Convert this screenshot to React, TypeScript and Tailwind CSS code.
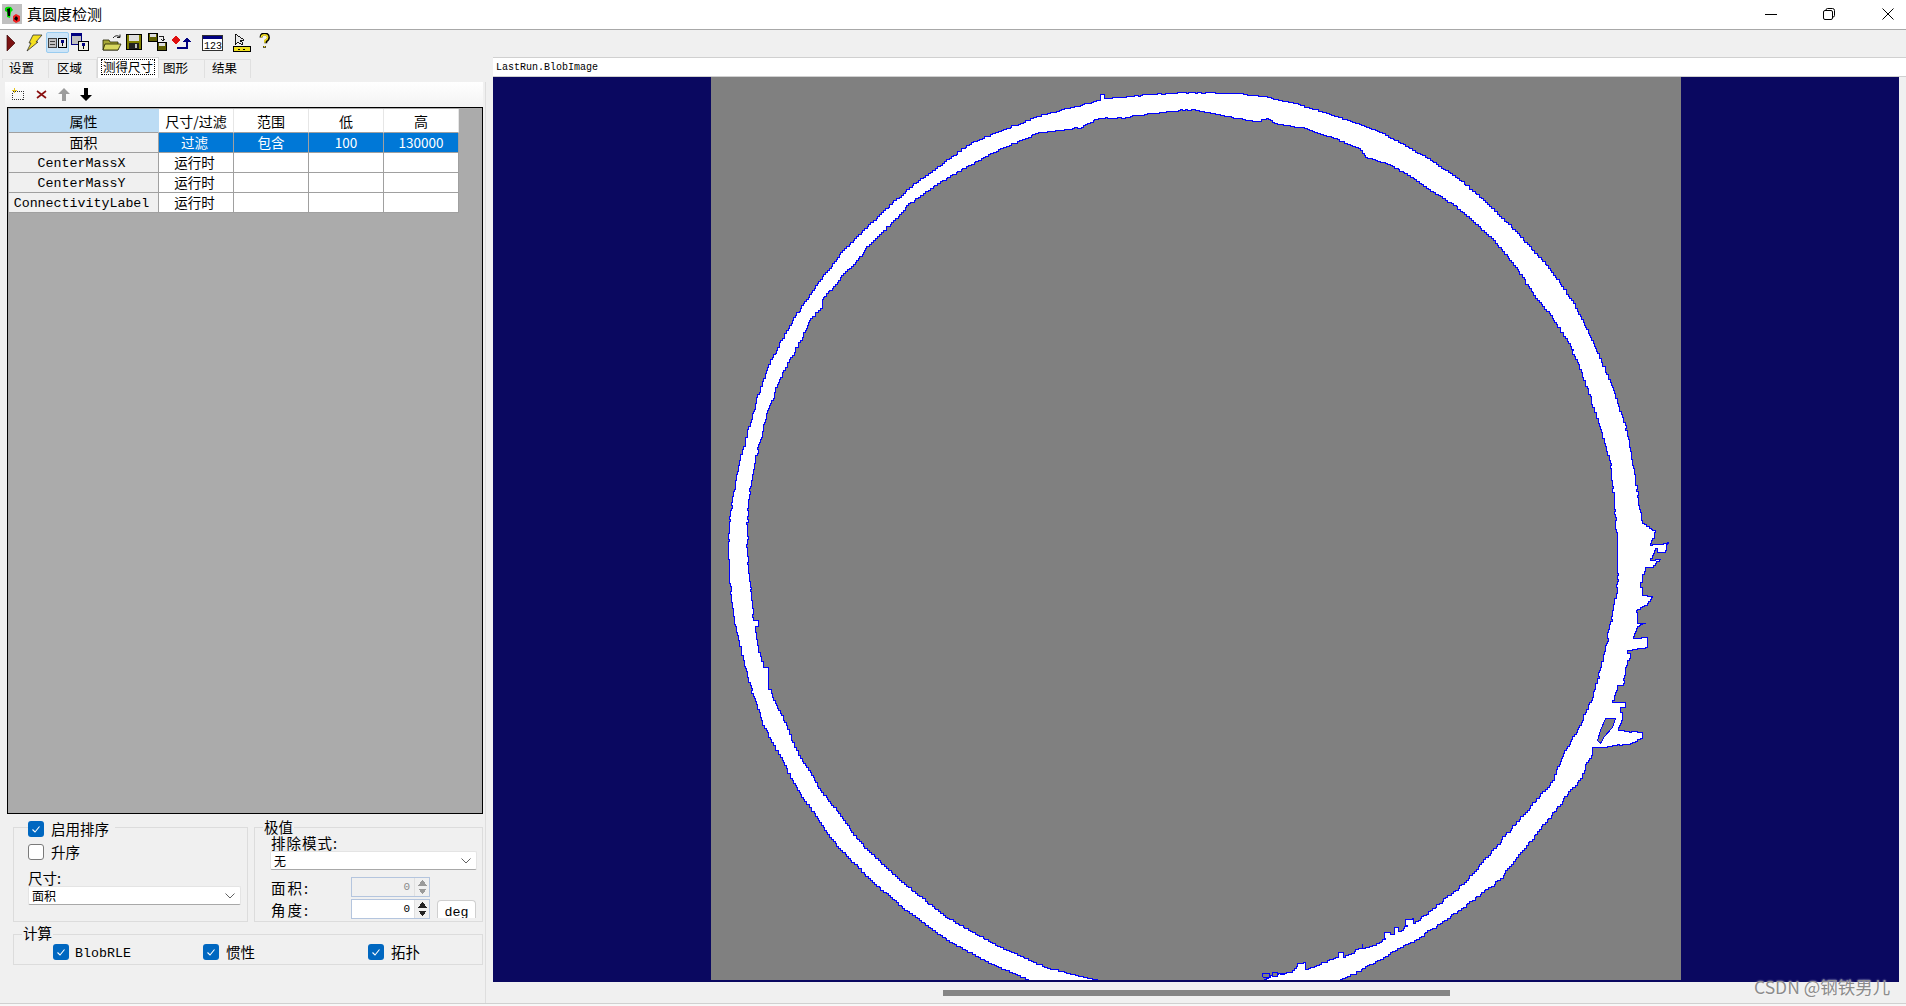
import React from 'react';

type Pt = [number, number];

const OUTER: Pt[] = [
  [1033, 981], [991, 963], [949, 940], [907, 910], [872, 880], [842, 850], [827, 832], [815, 813], [803, 797],
  [792, 778], [782, 757], [770, 737], [762, 720], [753, 693], [748, 677], [743, 657], [738, 637], [733, 613],
  [730, 583], [728, 550], [730, 513], [735, 480], [740, 457], [747, 432], [755, 403], [763, 378], [772, 357],
  [782, 338], [792, 320], [803, 303], [812, 290], [827, 270], [842, 250], [873, 220], [909, 187], [949, 158],
  [971, 142], [1033, 117], [1096, 100], [1100, 94], [1104, 98], [1140, 95], [1180, 92], [1235, 93], [1267, 97],
  [1293, 103], [1320, 111], [1347, 120], [1377, 131], [1400, 143], [1427, 158], [1457, 178], [1483, 200],
  [1517, 233], [1550, 270], [1573, 303], [1593, 343], [1613, 390], [1627, 433], [1635, 480], [1638, 500],
  [1642, 523], [1655, 532], [1650, 545], [1663, 543], [1668, 542], [1665, 552], [1657, 548], [1650, 560],
  [1660, 559], [1653, 567], [1645, 568], [1640, 587], [1642, 595], [1652, 597], [1647, 605], [1637, 610],
  [1637, 623], [1645, 623], [1637, 628], [1633, 638], [1647, 637], [1647, 647], [1632, 650], [1627, 653],
  [1630, 658], [1625, 670], [1623, 685], [1617, 690], [1612, 702], [1618, 702], [1625, 707], [1620, 712],
  [1622, 717], [1618, 730], [1637, 732], [1642, 738], [1632, 743], [1617, 745], [1598, 747], [1592, 752],
  [1580, 780], [1500, 880], [1461, 910], [1421, 937], [1380, 960], [1340, 981],
];

const INNER: Pt[] = [
  [1263, 981], [1270, 975], [1290, 972], [1297, 963], [1303, 962], [1305, 969], [1335, 957], [1338, 952],
  [1343, 957], [1358, 948], [1362, 943], [1362, 948], [1375, 945], [1385, 938], [1384, 932], [1390, 934],
  [1394, 927], [1398, 931], [1407, 925], [1405, 919], [1412, 918], [1413, 923], [1430, 910], [1466, 880],
  [1552, 780], [1563, 753], [1578, 727], [1592, 697], [1600, 667], [1606, 643], [1612, 613], [1617, 587],
  [1617, 540], [1614, 500], [1610, 460], [1598, 420], [1585, 380], [1570, 343], [1550, 313], [1535, 295],
  [1517, 267], [1493, 238], [1473, 220], [1453, 203], [1430, 189], [1410, 175], [1390, 164], [1367, 157],
  [1360, 148], [1337, 138], [1317, 132], [1307, 128], [1277, 123], [1268, 118], [1257, 121], [1228, 116],
  [1213, 113], [1193, 109], [1180, 110], [1127, 117], [1100, 118], [1083, 127], [1038, 133], [993, 153],
  [971, 165], [940, 183], [908, 205], [895, 220], [865, 250], [858, 260], [845, 273], [833, 288], [824, 297],
  [822, 308], [810, 320], [803, 337], [792, 357], [783, 372], [775, 392], [767, 413], [760, 442], [755, 460],
  [751, 483], [747, 510], [747, 550], [748, 573], [751, 597], [753, 620], [758, 626], [755, 632], [758, 650],
  [763, 667], [768, 673], [768, 687], [775, 703], [780, 713], [787, 727], [792, 742], [800, 758], [810, 772],
  [818, 788], [830, 803], [842, 818], [853, 835], [867, 850], [899, 880], [945, 917], [995, 945], [1044, 967],
  [1100, 981],
];

// stair-steps the outline so it looks like a traced bitmap edge
const traceEdge = (pts: Pt[]) => {
  let seed = 17;
  const noise = () => {
    seed = (seed * 137 + 91) % 1009;
    return (seed / 1009 - 0.5) * 1.6;
  };
  let d = '';
  pts.forEach(([x, y], i) => {
    if (i === 0) {
      d += `M${x + 0.5} ${y + 0.5}`;
      return;
    }
    const [px, py] = pts[i - 1];
    const len = Math.hypot(x - px, y - py);
    const steps = len < 9 ? 1 : Math.ceil(len / 3);
    for (let s = 1; s <= steps; s++) {
      const t = s / steps;
      const jitter = s === steps ? 0 : noise();
      const nx = Math.round(px + (x - px) * t + jitter) + 0.5;
      const ny = Math.round(py + (y - py) * t + jitter * 0.6) + 0.5;
      d += `H${nx}V${ny}`;
    }
  });
  return d + 'Z';
};

const RING_PATH = traceEdge([...OUTER, ...INNER]);

const MONO = "font-['Liberation_Mono','Noto_Sans_CJK_SC',monospace]";

const COLS = ['w-[150px]', 'w-[75px]', 'w-[75px]', 'w-[75px]', 'w-[75px]'];
const HEADERS = ['属性', '尺寸/过滤', '范围', '低', '高'];
const ROWS = [
  { name: '面积', cells: ['过滤', '包含', '100', '130000'], selected: true },
  { name: 'CenterMassX', cells: ['运行时', '', '', ''], mono: true },
  { name: 'CenterMassY', cells: ['运行时', '', '', ''], mono: true },
  { name: 'ConnectivityLabel', cells: ['运行时', '', '', ''], mono: true },
];

const Checkbox = ({ checked = true }: { checked?: boolean }) => (
  <div
    className={`flex items-center justify-center w-4 h-4 shrink-0 rounded-[3px] ${
      checked ? 'bg-[#0067c0]' : 'bg-white border border-[#7a7a7a]'
    }`}
  >
    {checked && (
      <svg width="10" height="10" viewBox="0 0 10 10" fill="none">
        <path d="M1.5 5.5 L4 8 L8.5 2.5" stroke="white" strokeWidth="1.1" />
      </svg>
    )}
  </div>
);

const Chevron = () => (
  <svg width="10" height="6" viewBox="0 0 10 6" fill="none">
    <path d="M0.5 0.5 L5 5 L9.5 0.5" stroke="#606060" strokeWidth="1" />
  </svg>
);

const Select = ({ label, width }: { label: string; width: string }) => (
  <div
    className={`${width} h-[19px] flex items-center justify-between pl-[3px] pr-[5px] bg-white rounded-[2px] border border-[#e4e4e4] border-b-[#a8a8a8] text-[12px] leading-none`}
  >
    <span>{label}</span>
    <Chevron />
  </div>
);

const Spin = ({ disabled = false }: { disabled?: boolean }) => (
  <div
    className={`w-[79px] h-5 flex items-center justify-end border border-[#b4c5de] ${
      disabled ? 'bg-[#f0f0f0] text-[#8a8a8a]' : 'bg-white text-black'
    }`}
  >
    <span className={`${MONO} text-[11px] leading-none pr-[4px]`}>0</span>
    <div className="w-[15px] h-[18px] bg-[#f0f0f0] flex flex-col items-center justify-center gap-[2px] border-l border-[#e0e0e0]">
      <svg width="9" height="6" viewBox="0 0 9 6" shapeRendering="crispEdges">
        <path d="M0 5.5 L4.5 0 L9 5.5 Z" fill={disabled ? '#9a9a9a' : '#222222'} />
      </svg>
      <svg width="9" height="6" viewBox="0 0 9 6" shapeRendering="crispEdges">
        <path d="M0 0.5 L9 0.5 L4.5 6 Z" fill={disabled ? '#9a9a9a' : '#222222'} />
      </svg>
    </div>
  </div>
);

const TitleIcon = () => (
  <svg width="20" height="20" viewBox="0 0 20 20" className="ml-[2px] shrink-0">
    <rect width="20" height="20" fill="#c0c0c0" />
    <path d="M3 4 Q5 2 9 3 L11 6 L9 8 L8 14 L5 13 L5 8 L3 7 Z" fill="#00e000" />
    <path d="M5 5 L8 4 L8 12 L6 12 Z" fill="#000000" />
    <path d="M11 12 L14 10 L18 12 L18 17 L14 19 L11 17 Z" fill="#f02020" />
    <path d="M12 15 L14 12 L16 14 L15 17 Z" fill="#000000" />
  </svg>
);

const Toolbar = () => (
  <div className="flex items-center h-[23px] mt-px mb-[3px]">
    {/* run */}
    <svg width="12" height="18" viewBox="0 0 12 18" className="ml-[5px]">
      <path d="M2 1 L10 9 L2 17 Z" fill="#7c1212" stroke="#3c0808" strokeWidth="0.7" />
    </svg>
    {/* lightning */}
    <svg width="18" height="18" viewBox="0 0 18 18" className="ml-[8px]">
      <path d="M8 1 L17 1 L11 8 L13 8 L2 17 L6 9 L4 9 Z" fill="#f5e020" stroke="#303030" strokeWidth="0.8" />
    </svg>
    {/* selected mode button */}
    <div className="ml-[3px] w-[23px] h-[21px] flex items-center justify-center bg-[#cce4f7] border border-[#99ccf0] rounded-[2px]">
      <svg width="19" height="10" viewBox="0 0 19 10" shapeRendering="crispEdges">
        <rect x="0.5" y="0.5" width="8" height="9" fill="#c0c0c0" stroke="#404040" />
        <path d="M2 3.5H7M2 6.5H7" stroke="#404040" />
        <rect x="10.5" y="0.5" width="8" height="9" fill="#e8e8e8" stroke="#000000" />
        <rect x="13" y="2" width="3" height="3" fill="#000080" />
        <rect x="14" y="5" width="1" height="3" fill="#000000" />
      </svg>
    </div>
    {/* views */}
    <svg width="19" height="19" viewBox="0 0 19 19" className="ml-[2px]" shapeRendering="crispEdges">
      <rect x="0.5" y="0.5" width="10" height="11" fill="#c0c0c0" stroke="#000080" />
      <rect x="1" y="1" width="9" height="2" fill="#000080" />
      <rect x="7.5" y="8.5" width="10" height="9" fill="#f0f0e0" stroke="#000000" />
      <rect x="11" y="10" width="3" height="3" fill="#000080" />
      <rect x="12" y="13" width="1" height="3" fill="#000000" />
    </svg>
    {/* open */}
    <svg width="20" height="18" viewBox="0 0 20 18" className="ml-[12px]">
      <path d="M1 6 L7 6 L8 8 L16 8 L16 16 L1 16 Z" fill="#a8a838" stroke="#202000" strokeWidth="0.8" />
      <path d="M3 10 L19 10 L16 16 L1 16 Z" fill="#d8d860" stroke="#202000" strokeWidth="0.8" />
      <path d="M11 4 Q14 0 18 3 M18 0.5 L18 3.5 L15 3.5" fill="none" stroke="#202020" strokeWidth="1" />
    </svg>
    {/* save */}
    <svg width="17" height="17" viewBox="0 0 17 17" className="ml-[4px]" shapeRendering="crispEdges">
      <rect x="0.5" y="0.5" width="15" height="15" fill="#808000" stroke="#000000" />
      <rect x="3" y="1" width="10" height="6" fill="#e0e0e0" />
      <rect x="3" y="9" width="10" height="6" fill="#202020" />
      <rect x="9" y="10" width="2" height="4" fill="#c0c0c0" />
    </svg>
    {/* save as */}
    <svg width="19" height="19" viewBox="0 0 19 19" className="ml-[5px]" shapeRendering="crispEdges">
      <rect x="0.5" y="0.5" width="9" height="8" fill="#606000" stroke="#000000" />
      <rect x="2" y="1" width="6" height="3" fill="#e0e0e0" />
      <rect x="9.5" y="9.5" width="9" height="8" fill="#606000" stroke="#000000" />
      <rect x="11" y="10" width="6" height="3" fill="#e0e0e0" />
      <path d="M11 3 H15 V7 M13 6 L15 8 L17 6" fill="none" stroke="#202020" />
    </svg>
    {/* reset */}
    <svg width="19" height="18" viewBox="0 0 19 18" className="ml-[5px]" shapeRendering="crispEdges">
      <circle cx="4" cy="6" r="3.2" fill="#e01010" />
      <rect x="0" y="5" width="8" height="2" fill="#e01010" />
      <rect x="3" y="2" width="2" height="8" fill="#e01010" />
      <path d="M16 8 V15 H5 V13 H14 V8 Z" fill="#000080" />
      <path d="M15 3 L19 8 L11 8 Z" fill="#000080" />
    </svg>
    {/* numeric */}
    <svg width="22" height="18" viewBox="0 0 22 18" className="ml-[11px]" shapeRendering="crispEdges">
      <rect x="0.5" y="1.5" width="20" height="15" fill="#ffffff" stroke="#303030" />
      <rect x="1" y="2" width="19" height="3" fill="#000080" />
      <text x="2" y="15" fontSize="10" fontFamily="Liberation Mono" fill="#000000">123</text>
    </svg>
    {/* measure */}
    <svg width="19" height="20" viewBox="0 0 19 20" className="ml-[9px]" shapeRendering="crispEdges">
      <path d="M2 1 L2 12 L5 9 L9 12 L10 10 L7 8 L11 7 Z" fill="#e8e8e8" stroke="#000000" strokeWidth="0.9" />
      <rect x="0.5" y="13.5" width="17" height="5" fill="#f0e020" stroke="#000000" />
      <path d="M5 16H7M10 16H12" stroke="#000000" />
    </svg>
    {/* help */}
    <svg width="11" height="16" viewBox="0 0 12 18" className="ml-[7px] mb-[3px]">
      <path
        d="M2 5 Q2 1 6 1 Q10.5 1 10.5 5 Q10.5 7.5 7.5 9 L7.5 11.5 M6 14.5 L6 16.5"
        fill="none"
        stroke="#000000"
        strokeWidth="3.2"
      />
      <path
        d="M2.5 5 Q2.5 2 6 2 Q9.5 2 9.5 5 Q9.5 7 6.5 8.5 L6.5 11 M6 14.5 L6 16"
        fill="none"
        stroke="#f5e020"
        strokeWidth="1.8"
      />
    </svg>
  </div>
);

const SubToolbar = () => (
  <div className="flex items-center h-[25px] mt-[4px] ml-[4px] mr-[2px] pl-[6px] bg-gradient-to-b from-white to-[#f3f3f3]">
    <svg width="14" height="13" viewBox="0 0 14 13" shapeRendering="crispEdges">
      <rect x="1.5" y="3.5" width="11" height="8" fill="none" stroke="#333333" strokeDasharray="1 1" />
      <path d="M3 0 V5 M0.5 2.5 H5.5" stroke="#e8c820" />
    </svg>
    <svg width="11" height="11" viewBox="0 0 11 11" className="ml-[11px]">
      <path d="M1 2 L10 9 M10 2 L1 9" stroke="#8a1010" strokeWidth="1.6" />
    </svg>
    <svg width="12" height="13" viewBox="0 0 12 13" className="ml-[11px]">
      <path d="M6 0 L12 6 L8 6 L8 13 L4 13 L4 6 L0 6 Z" fill="#9c9c9c" />
    </svg>
    <svg width="12" height="13" viewBox="0 0 12 13" className="ml-[10px]">
      <path d="M6 13 L12 7 L8 7 L8 0 L4 0 L4 7 L0 7 Z" fill="#000000" />
    </svg>
  </div>
);

const Tabs = () => (
  <div className="flex items-end h-[21px] pl-[2px] text-[12.5px] leading-none">
    <div className="w-[47px] h-[19px] pl-[6px] pb-[2px] flex items-center border border-b-0 border-[#e0e0e0]">设置</div>
    <div className="w-[48px] h-[19px] pl-[8px] pb-[2px] flex items-center border border-b-0 border-l-0 border-[#e0e0e0]">区域</div>
    <div className="w-[62px] h-[21px] pb-[2px] flex items-center justify-center bg-white border border-b-0 border-[#d8d8d8]">
      <span className="px-[1px] py-[1px] border border-dotted border-black">测得尺寸</span>
    </div>
    <div className="w-[46px] h-[19px] pl-[4px] pb-[2px] flex items-center border border-b-0 border-l-0 border-[#e0e0e0]">图形</div>
    <div className="w-[46px] h-[19px] pl-[7px] pb-[2px] flex items-center border border-b-0 border-l-0 border-[#e0e0e0]">结果</div>
  </div>
);

const PropertyGrid = () => (
  <div className="ml-[6px] w-[476px] h-[707px] border border-black p-px bg-[#ababab]">
    <div className="flex h-6 text-[14px] leading-none">
      {HEADERS.map((h, i) => (
        <div
          key={h}
          className={`${COLS[i]} flex items-center justify-center border-b border-[#a0a0a0] border-r ${
            i === 0 ? 'bg-[#bcdcf4] border-r-[#bcdcf4]' : 'bg-white border-r-[#e6e6e6]'
          }`}
        >
          {h}
        </div>
      ))}
    </div>
    {ROWS.map((row) => (
      <div key={row.name} className="flex h-5 leading-none">
        <div
          className={`${COLS[0]} flex items-center justify-center bg-[#f0f0f0] border-r border-b border-[#a0a0a0] ${
            row.mono ? `${MONO} text-[13.3px] pt-[2px] pr-[4px]` : 'text-[14px] pb-[2px]'
          }`}
        >
          {row.name}
        </div>
        {row.cells.map((cell, i) => (
          <div
            key={i}
            className={`${COLS[i + 1]} flex items-center justify-center border-r border-b border-[#a0a0a0] text-[13.5px] ${
              i === 0 ? 'pr-[3px]' : ''
            } ${row.selected ? 'bg-[#0078d7] text-white' : 'bg-white text-black'}`}
          >
            {cell}
          </div>
        ))}
      </div>
    ))}
  </div>
);

const SortGroup = () => (
  <div className="w-[235px] h-[95px] border border-[#dcdcdc] pl-[14px] text-[14.5px] leading-none">
    <div className="flex items-center gap-[7px] h-4 -mt-[7px] w-fit bg-[#f0f0f0] pr-[6px]">
      <Checkbox />
      <span>启用排序</span>
    </div>
    <div className="flex items-center gap-[7px] h-4 mt-[7px]">
      <Checkbox checked={false} />
      <span>升序</span>
    </div>
    <div className="h-[16px] mt-[10px] flex items-center">尺寸:</div>
    <Select label="面积" width="w-[213px]" />
  </div>
);

const ExtremeGroup = () => (
  <div className="w-[229px] h-[95px] border border-[#dcdcdc] text-[14.5px] leading-none">
    <div className="h-[15px] -mt-[8px] ml-[8px] px-px w-fit bg-[#f0f0f0]">极值</div>
    <div className="h-[15px] mt-px ml-[16px] flex items-center tracking-[1px]">排除模式:</div>
    <div className="ml-[15px]">
      <Select label="无" width="w-[207px]" />
    </div>
    <div className="flex items-center h-5 mt-[7px] ml-[16px]">
      <span className="w-[80px] pt-[3px] tracking-[2px]">面积:</span>
      <Spin disabled />
    </div>
    <div className="flex items-center h-5 mt-[2px] ml-[16px]">
      <span className="w-[80px] pt-[2px] tracking-[2px]">角度:</span>
      <Spin />
      <div className={`${MONO} ml-[7px] w-[39px] h-[18px] overflow-hidden flex justify-center bg-white border border-b-0 border-[#cfcfcf] rounded-t-[4px] text-[13.3px] pt-[5px]`}>
        deg
      </div>
    </div>
  </div>
);

const ComputeGroup = () => (
  <div className="ml-[12px] mt-[12px] w-[470px] h-[31px] border border-[#dcdcdc] text-[14.5px] leading-none">
    <div className="h-4 -mt-[9px] ml-[8px] px-px w-fit bg-[#f0f0f0]">计算</div>
    <div className="flex mt-[2px] ml-[39px]">
      <div className="w-[150px] flex items-center gap-[6px]">
        <Checkbox />
        <span className={`${MONO} text-[13.3px] pt-[3px]`}>BlobRLE</span>
      </div>
      <div className="w-[165px] flex items-center gap-[7px]">
        <Checkbox />
        <span>惯性</span>
      </div>
      <div className="flex items-center gap-[7px]">
        <Checkbox />
        <span>拓扑</span>
      </div>
    </div>
  </div>
);

const BlobImage = () => (
  <div className="w-[1406px] h-[905px] flex justify-center pl-[1px] bg-[#0a0860]">
    <div className="-translate-x-[1px] w-[970px] h-[903px] bg-[#808080]">
      <svg width="970" height="903" viewBox="711 77 970 903" className="block">
        <path d={RING_PATH} fill="#ffffff" stroke="#0000ff" strokeWidth="1" shapeRendering="crispEdges" />
        <path
          d="M1597.5 740.5 L1600.5 730.5 L1605.5 718.5 L1615.5 718.5 L1612.5 727.5 L1604.5 736.5 L1600.5 743.5 Z"
          fill="#808080"
          stroke="#0000ff"
          shapeRendering="crispEdges"
        />
        <path
          d="M1262 973 H1269 V977 H1263 Z M1272 972 H1277 V976 H1272 Z M1280 974 H1285"
          fill="#808080"
          stroke="#0000ff"
          shapeRendering="crispEdges"
        />
      </svg>
    </div>
  </div>
);

const App = () => {
  return (
    <div className="relative w-[1906px] h-[1006px] overflow-hidden flex flex-col bg-[#f0f0f0] text-black font-['Noto_Sans_CJK_SC','Liberation_Sans',sans-serif]">
      {/* Title bar */}
      <div className="h-[30px] pb-[2px] flex items-center bg-white border-b border-[#a8a8a8]">
        <TitleIcon />
        <span className="ml-[5px] text-[15px] leading-none">真圆度检测</span>
        <div className="ml-auto flex items-center">
          <svg width="12" height="12" viewBox="0 0 12 12" shapeRendering="crispEdges">
            <path d="M0 6.5 H12" stroke="#000000" />
          </svg>
          <svg width="12" height="12" viewBox="0 0 12 12" className="ml-[46px]">
            <rect x="0.5" y="2.5" width="9" height="9" rx="1.5" fill="none" stroke="#000000" />
            <path d="M3 2 Q3 0.5 4.5 0.5 H9.5 Q11.5 0.5 11.5 2.5 V7.5 Q11.5 9 10 9" fill="none" stroke="#000000" />
          </svg>
          <svg width="12" height="12" viewBox="0 0 12 12" className="ml-[47px] mr-[12px]">
            <path d="M0.5 0.5 L11.5 11.5 M11.5 0.5 L0.5 11.5" stroke="#000000" strokeWidth="1" />
          </svg>
        </div>
      </div>

      <Toolbar />

      <div className="flex h-[946px]">
        {/* Left settings panel */}
        <div className="w-[493px] shrink-0">
          <Tabs />
          <div className="ml-px w-[485px] h-[922px] bg-[#f0f0f0] border-r border-b border-[#dedede]">
            <SubToolbar />
            <PropertyGrid />
            <div className="flex gap-[6px] ml-[12px] mt-[13px]">
              <SortGroup />
              <ExtremeGroup />
            </div>
            <ComputeGroup />
          </div>
        </div>

        {/* Image display */}
        <div className="w-[1413px]">
          <div className={`${MONO} h-5 flex items-center pl-[3px] pt-[2px] bg-white border-y border-[#d0d0d0] text-[10px] leading-none`}>
            LastRun.BlobImage
          </div>
          <BlobImage />
          <div className="h-[21px] pt-2">
            <div className="ml-[450px] w-[507px] h-[6px] bg-[#858585]" />
          </div>
        </div>
      </div>

      <div className="h-[3px] border-t border-[#d0d0d0] bg-[#f7f7f7]" />

      {/* Watermark */}
      <div className="absolute left-[1754px] top-[977px] text-[17.5px] leading-5 text-[#8c8c8c] [text-shadow:0_0_2px_#ffffff]">
        CSDN @钢铁男儿
      </div>
    </div>
  );
};

export default App;
